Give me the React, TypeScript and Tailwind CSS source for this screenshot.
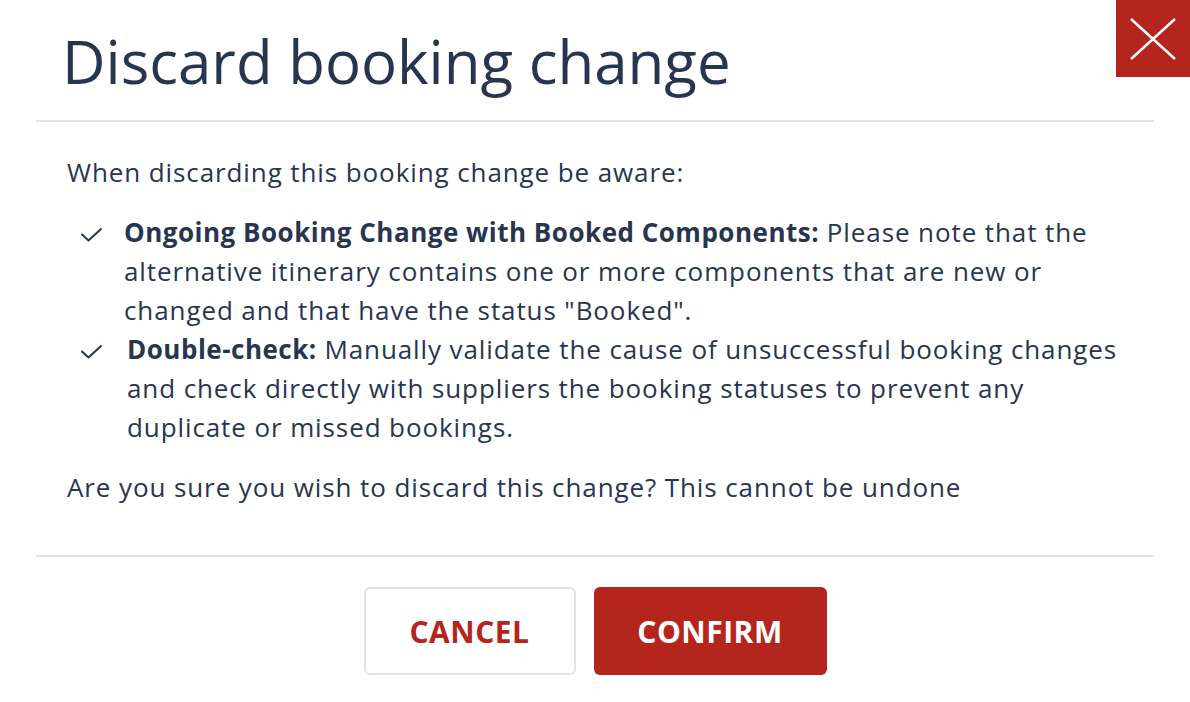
import React from "react";

function Check() {
  return (
    <svg width="24" height="16" viewBox="0 0 24 16" fill="none" className="shrink-0">
      <path d="M2 7.5 L8.5 13.5 L21 2" stroke="#28354f" strokeWidth="2" strokeLinecap="round" strokeLinejoin="round" />
    </svg>
  );
}

export default function App() {
  return (
    <div className="w-[1190px] h-[702px] bg-white text-[#28354f] relative" style={{ fontFamily: '"Open Sans", "Noto Sans", sans-serif' }}>
      <button className="absolute top-0 right-0 w-[74px] h-[77px] bg-[#b3251d] flex items-center justify-center">
        <svg width="48" height="44" viewBox="0 0 48 44">
          <path d="M2 2 L46 42 M46 2 L2 42" stroke="white" strokeWidth="2.5" />
        </svg>
      </button>
      <div className="px-[36px]">
        <div className="h-[122px] border-b-2 border-[#e3e3e3] pl-[26px] pt-[18px]">
          <h1 className="text-[60px] leading-[86px] font-normal tracking-[0px]">Discard booking change</h1>
        </div>
        <div className="pl-[31px] pr-[30px] text-[26px] leading-[39px] tracking-[0.9px]">
          <p className="mt-[31px]">When discarding this booking change be aware:</p>
          <ul className="mt-[21px]">
            <li className="flex items-start">
              <div className="w-[57px] shrink-0 pl-[13px] pt-[14px]"><Check /></div>
              <div>
                <b className="font-bold tracking-[0.5px]">Ongoing Booking Change with Booked Components:</b> Please note that the alternative itinerary contains one or more components that are new or changed and that have the status "Booked".
              </div>
            </li>
            <li className="flex items-start">
              <div className="w-[60px] shrink-0 pl-[13px] pt-[14px]"><Check /></div>
              <div>
                <b className="font-bold tracking-[0.5px]">Double-check:</b> Manually validate the cause of unsuccessful booking changes and check directly with suppliers the booking statuses to prevent any duplicate or missed bookings.
              </div>
            </li>
          </ul>
          <p className="mt-[21px]">Are you sure you wish to discard this change? This cannot be undone</p>
        </div>
        <div className="mt-[48px] border-t-2 border-[#e3e3e3] flex justify-center gap-[18px] pt-[30px]">
          <button className="w-[212px] h-[88px] rounded-[6px] border-2 border-[#e3e3e3] bg-white text-[#b3251d] text-[30px] font-bold tracking-[0.5px]">CANCEL</button>
          <button className="w-[233px] h-[88px] rounded-[6px] bg-[#b3251d] text-white text-[30px] font-bold tracking-[0.5px]">CONFIRM</button>
        </div>
      </div>
    </div>
  );
}
